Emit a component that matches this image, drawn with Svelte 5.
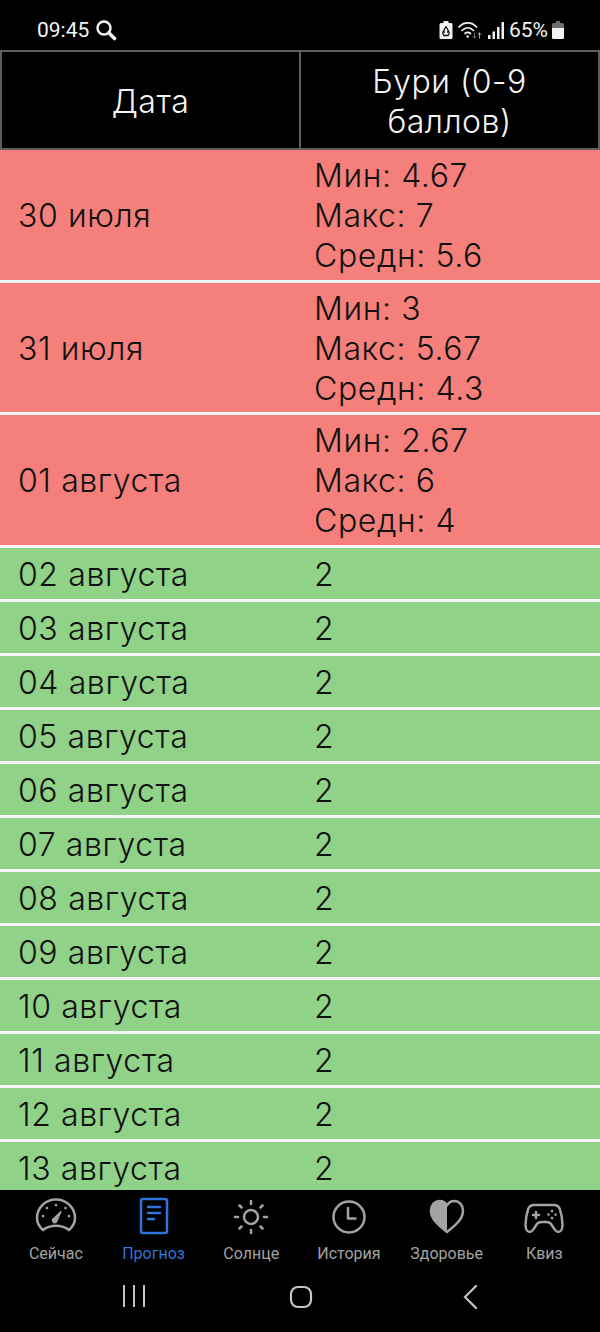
<script>
	const stormDays = [
		{ date: '30 июля', min: '4.67', max: '7', avg: '5.6' },
		{ date: '31 июля', min: '3', max: '5.67', avg: '4.3' },
		{ date: '01 августа', min: '2.67', max: '6', avg: '4' }
	];
	const calmDays = ['02', '03', '04', '05', '06', '07', '08', '09', '10', '11', '12', '13'];
</script>

<div class="screen">
	<header class="status">
		<div class="status-left">
			<span>09:45</span>
			<svg width="22" height="22" viewBox="0 0 22 22" fill="none" stroke="#f2f2f2" stroke-linecap="round">
				<circle cx="9" cy="9" r="6.500" stroke-width="2.400" />
				<path d="M13.800 13.800 19.500 19.500" stroke-width="3.600" />
			</svg>
		</div>
		<div class="status-right">
			<svg width="14" height="20" viewBox="0 0 14 20">
				<path d="M4.500 1h5v2H12a1.500 1.500 0 0 1 1.500 1.500V17.500A1.500 1.500 0 0 1 12 19H2a1.500 1.500 0 0 1-1.500-1.500V4.500A1.500 1.500 0 0 1 2 3h2.500z" fill="#f2f2f2" />
				<path d="M7 6.500 4 12h2M7 6.500 10 12H8M3.500 13 5 15.500h4L10.500 13" fill="none" stroke="#111" stroke-width="1.300" />
			</svg>
			<svg class="wifi" width="25" height="20" viewBox="0 0 25 20" fill="none" stroke="#f2f2f2" stroke-linecap="round">
				<path d="M1 7c5-5.500 12.500-5.500 17.500 0" stroke-width="1.700" />
				<path d="M4 10.500c3.500-3.500 8-3.500 11.500 0" stroke-width="1.700" />
				<path d="M7 13.500c1.800-1.600 3.700-1.600 5.500 0" stroke-width="1.700" />
				<circle cx="9.700" cy="16.500" r="1.300" fill="#f2f2f2" stroke="none" />
				<path d="M16.500 13v5M15 16.500l1.500 1.500 1.500-1.500" stroke="#777" stroke-width="1" />
				<path d="M21.500 18v-5M20 14.500l1.500-1.500 1.500 1.500" stroke="#aaa" stroke-width="1" />
			</svg>
			<svg width="17" height="20" viewBox="0 0 17 20" fill="#f2f2f2">
				<rect x="0" y="15" width="2.500" height="4" />
				<rect x="4.500" y="11.500" width="2.500" height="7.500" />
				<rect x="9" y="7" width="2.500" height="12" />
				<rect x="13.500" y="2" width="2.500" height="17" />
			</svg>
			<span class="percent">65%</span>
			<svg width="12" height="20" viewBox="0 0 12 20">
				<path d="M4 1h4v2h2.500A1.500 1.500 0 0 1 12 4.500V8H0V4.500A1.500 1.500 0 0 1 1.500 3H4z" fill="#6e6e6e" />
				<path d="M0 8h12v9.500a1.500 1.500 0 0 1-1.500 1.500h-9A1.500 1.500 0 0 1 0 17.500z" fill="#f2f2f2" />
			</svg>
		</div>
	</header>

	<main class="table-wrap">
		<div class="row head">
			<div class="cell head-cell">Дата</div>
			<div class="cell head-cell">Бури (0-9 баллов)</div>
		</div>
		{#each stormDays as day}
			<div class="row storm">
				<div class="cell">{day.date}</div>
				<div class="cell stats">
					<span>Мин: {day.min}</span>
					<span>Макс: {day.max}</span>
					<span>Средн: {day.avg}</span>
				</div>
			</div>
		{/each}
		{#each calmDays as d}
			<div class="row calm">
				<div class="cell">{d} августа</div>
				<div class="cell">2</div>
			</div>
		{/each}
	</main>

	<nav class="tabs">
		<div class="tab">
			<svg width="42" height="38" viewBox="0 0 42 38" fill="none" stroke="currentColor" stroke-width="2.500" stroke-linecap="round" stroke-linejoin="round">
				<path d="M8 33C3.500 29 2 25 2 21a19 18.500 0 0 1 38 0c0 4-1.500 8-6 12-3.500-2.800-8-4.300-13-4.300S11.500 30.200 8 33z" />
				<path d="M17.500 22.500 26 14.500l-4.500 10.500a2.400 2.400 0 0 1-4-2.500z" fill="currentColor" stroke-width="1.200" />
				<g stroke-width="2.600">
					<path d="M21 8v.1M12 11v.1M30.500 11v.1M8 19v.1M34 19v.1" />
				</g>
			</svg>
			<span>Сейчас</span>
		</div>
		<div class="tab active">
			<svg width="30" height="38" viewBox="0 0 30 38" fill="none" stroke="currentColor" stroke-width="2.500" stroke-linecap="round" stroke-linejoin="round">
				<rect x="2" y="2" width="26" height="34" rx="2" />
				<path d="M9 10h12M9 16h12M9 22h6" />
			</svg>
			<span>Прогноз</span>
		</div>
		<div class="tab">
			<svg width="36" height="36" viewBox="0 0 36 36" fill="none" stroke="currentColor" stroke-linecap="round">
				<circle cx="18" cy="18" r="7" stroke-width="2.500" />
				<path d="M18 2v3M18 31v3M2 18h3M31 18h3M6.500 6.500l2 2M27.500 27.500l2 2M6.500 29.500l2-2M27.500 8.500l2-2" stroke-width="2.500" />
			</svg>
			<span>Солнце</span>
		</div>
		<div class="tab">
			<svg width="36" height="36" viewBox="0 0 36 36" fill="none" stroke="currentColor" stroke-width="2.500" stroke-linecap="round" stroke-linejoin="round">
				<circle cx="18" cy="18" r="15.500" />
				<path d="M17 9v10.500h7.500" />
			</svg>
			<span>История</span>
		</div>
		<div class="tab">
			<svg width="36" height="36" viewBox="0 0 36 36" fill="none" stroke="currentColor" stroke-width="2.500" stroke-linejoin="round">
				<path d="M18 33C9 26 2 20 2 11.500 2 6 6 2 10.500 2 13.500 2 16.500 3.500 18 6.500 19.500 3.500 22.500 2 25.500 2 30 2 34 6 34 11.500 34 20 27 26 18 33z" />
				<path d="M18 33C9 26 2 20 2 11.500 2 6 6 2 10.500 2 13.500 2 16.500 3.500 18 6.500z" fill="currentColor" stroke="none" />
			</svg>
			<span>Здоровье</span>
		</div>
		<div class="tab">
			<svg width="40" height="32" viewBox="0 0 40 32" fill="none" stroke="currentColor" stroke-width="2.500" stroke-linecap="round" stroke-linejoin="round">
				<path d="M10 2h20c3 0 5 1.500 6 4.500 1.500 5 2.500 10 2.500 15 0 4-1.500 7.500-4 7.500-3 0-5-4-7-7.500-1.500-2-3-2.500-5-2.500h-5c-2 0-3.500.5-5 2.500-2 3.500-4 7.500-7 7.500-2.500 0-4-3.500-4-7.500 0-5 1-10 2.500-15C5 3.500 7 2 10 2z" />
				<path d="M12 9v6M9 12h6" />
				<path d="M28 8v.1M28 15v.1M24.500 11.500v.1M31.500 11.500v.1" stroke-width="2.600" />
			</svg>
			<span>Квиз</span>
		</div>
	</nav>

	<div class="sysbar">
		<svg width="24" height="22" viewBox="0 0 24 22" stroke="#c4c4c4" stroke-width="2">
			<path d="M2 0v22M12 0v22M22 0v22" />
		</svg>
		<svg width="24" height="24" viewBox="0 0 24 24" fill="none" stroke="#c4c4c4" stroke-width="2.200">
			<rect x="2" y="2" width="20" height="20" rx="7" />
		</svg>
		<svg width="16" height="24" viewBox="0 0 16 24" fill="none" stroke="#c4c4c4" stroke-width="2.200" stroke-linecap="round">
			<path d="M13 1 2 12l11 11" />
		</svg>
	</div>
</div>

<style>
	:global(body) {
		margin: 0;
		background: #000;
	}

	.screen {
		width: 600px;
		height: 1332px;
		display: flex;
		flex-direction: column;
		overflow: hidden;
		background: #000;
		font-family: 'Inter', 'Open Sans', sans-serif;
	}

	.status {
		height: 50px;
		flex: none;
		display: flex;
		align-items: center;
		justify-content: space-between;
		padding: 10px 36px 0 37px;
		box-sizing: border-box;
		color: #f2f2f2;
		font-family: 'Roboto', sans-serif;
		font-size: 21px;
	}

	.status-left,
	.status-right {
		display: flex;
		align-items: center;
	}

	.status-left {
		gap: 6px;
	}

	.status-right {
		gap: 5px;
	}

	.percent {
		margin: 0 -1px 0 -1px;
	}

	.table-wrap {
		flex: 1;
		min-height: 0;
		overflow: hidden;
	}

	.row {
		display: grid;
		grid-template-columns: 300px 300px;
		color: #111;
	}

	.cell {
		display: flex;
		flex-direction: column;
		justify-content: center;
		padding: 3px 18px 0;
		box-sizing: border-box;
		font-size: 32px;
		line-height: 40px;
		letter-spacing: 0.6px;
		font-weight: 350;
	}

	.cell:last-child {
		padding-left: 14px;
	}

	.storm,
	.calm {
		border-bottom: 3px solid #f4f4f4;
		box-sizing: border-box;
	}

	.storm {
		height: 132.500px;
		background: #f5807b;
	}

	.calm {
		height: 54px;
		background: #90d288;
	}

	.head {
		height: 100px;
		grid-template-columns: 301px 299px;
		color: #f4f4f4;
		background: #000;
	}

	.head .head-cell {
		border: 2px solid #5e5e5e;
		padding: 3px 30px 0;
		align-items: center;
		text-align: center;
		font-weight: 300;
		letter-spacing: 0.5px;
	}

	.head .head-cell:last-child {
		border-left: 0;
	}

	.tabs {
		height: 80px;
		flex: none;
		display: grid;
		grid-template-columns: repeat(6, 97.700px);
		padding-left: 7px;
		color: #a3a3a3;
		font-family: 'Roboto', sans-serif;
		font-size: 16px;
	}

	.tab {
		display: flex;
		flex-direction: column;
		align-items: center;
		justify-content: flex-end;
		gap: 9px;
		padding-bottom: 7px;
	}

	.active {
		color: #2f74d8;
	}

	.sysbar {
		height: 62px;
		flex: none;
		display: grid;
		grid-template-columns: 268px 66px 273px;
		justify-items: center;
		align-items: start;
		padding-top: 15px;
		box-sizing: border-box;
	}
</style>
